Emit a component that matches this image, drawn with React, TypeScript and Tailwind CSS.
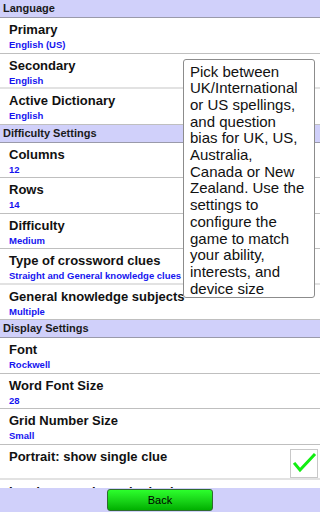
import React from "react";

type Row = { title: string; value?: string; check?: boolean; divider?: "thin" | "band" };

const Header = ({ label }: { label: string }) => (
  <div className="h-[18px] shrink-0 bg-[#d0d0fa] border-b border-[#9a9aaa] flex items-center pl-[3px] text-[11px] font-bold text-[#1a1a1a] leading-none">
    {label}
  </div>
);

const SettingRow = ({ row }: { row: Row }) => (
  <div
    className={
      "relative h-[35.5px] shrink-0 bg-white box-border pl-[9px] pt-[4px] " +
      (row.divider === "band" ? "border-b-2 border-[#e2e2e2]" : "border-b border-[#bfbfbf]")
    }
  >
    <div className="text-[13px] leading-[15px] font-bold text-[#111] whitespace-nowrap">{row.title}</div>
    {row.value && (
      <div className="mt-[2px] text-[9.5px] leading-[11px] font-bold text-[#1515f0] whitespace-nowrap">{row.value}</div>
    )}
    {row.check && (
      <div className="absolute left-[290px] top-[4px] w-[28px] h-[29px] border border-[#c8c8c8] bg-white">
        <svg width="28" height="29" viewBox="0 0 28 29" className="absolute -left-px -top-px">
          <polyline points="5,15 10,21 24,6" fill="none" stroke="#11ee11" strokeWidth="3" strokeLinecap="square" />
        </svg>
      </div>
    )}
  </div>
);

const language: Row[] = [
  { title: "Primary", value: "English (US)" },
  { title: "Secondary", value: "English", divider: "band" },
  { title: "Active Dictionary", value: "English" },
];
const difficulty: Row[] = [
  { title: "Columns", value: "12" },
  { title: "Rows", value: "14" },
  { title: "Difficulty", value: "Medium" },
  { title: "Type of crossword clues", value: "Straight and General knowledge clues", divider: "band" },
  { title: "General knowledge subjects", value: "Multiple" },
];
const display: Row[] = [
  { title: "Font", value: "Rockwell" },
  { title: "Word Font Size", value: "28" },
  { title: "Grid Number Size", value: "Small" },
  { title: "Portrait: show single clue", check: true, divider: "band" },
  { title: "Landscape: show single clue" },
];

const tipLines = [
  "Pick between",
  "UK/International",
  "or US spellings,",
  "and question",
  "bias for UK, US,",
  "Australia,",
  "Canada or New",
  "Zealand. Use the",
  "settings to",
  "configure the",
  "game to match",
  "your ability,",
  "interests, and",
  "device size",
];

export default function App() {
  return (
    <div
      className="relative w-[320px] h-[512px] overflow-hidden flex flex-col bg-white"
      style={{ fontFamily: '"Liberation Sans", Arial, sans-serif' }}
    >
      <div className="flex-1 min-h-0 overflow-hidden flex flex-col">
        <Header label="Language" />
        {language.map((r) => (
          <SettingRow key={r.title} row={r} />
        ))}
        <Header label="Difficulty Settings" />
        {difficulty.map((r) => (
          <SettingRow key={r.title} row={r} />
        ))}
        <Header label="Display Settings" />
        {display.map((r) => (
          <SettingRow key={r.title} row={r} />
        ))}
      </div>
      <div className="h-[24px] shrink-0 bg-[#d0d0fa] flex items-center justify-center">
        <button className="w-[106px] h-[22px] rounded-[3px] border border-[#2f6a2f] bg-gradient-to-b from-[#2cff2c] to-[#00b000] text-[11px] text-black leading-none">
          Back
        </button>
      </div>

      <div className="absolute left-[183px] top-[59px] w-[132px] bg-white border border-[#8c8c8c] rounded-[3px] pl-[6px] pt-[3.5px] text-[15px] leading-[16.7px] text-[#111] whitespace-nowrap">
        {tipLines.map((l) => (
          <div key={l}>{l}</div>
        ))}
      </div>
    </div>
  );
}
